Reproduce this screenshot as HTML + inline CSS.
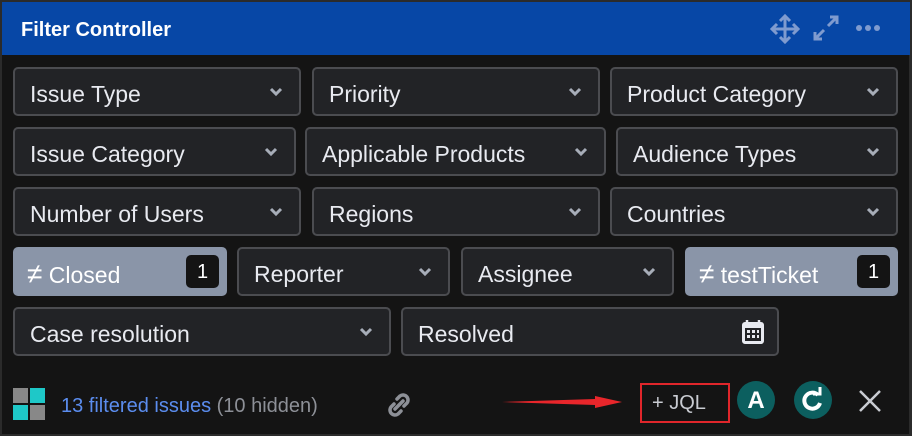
<!DOCTYPE html><html><head><style>
body{margin:0;width:912px;height:436px;background:#2b2b2b;font-family:"Liberation Sans",sans-serif;overflow:hidden;position:relative}
.hd{position:absolute;left:2px;top:2px;width:908px;height:53px;background:#0747a6;color:#fff;font-weight:bold;font-size:20px;line-height:56px;text-indent:19px}
.bd{position:absolute;left:2px;top:55px;width:907px;height:379px;background:#141414}
.b{position:absolute;box-sizing:border-box;height:49px;background:#222326;border:2px solid #4b4c50;border-radius:5px;color:#e8eaf0;font-size:23px;line-height:50px;padding-left:15px;white-space:nowrap}
.b svg.c{position:absolute;right:16px;top:18px}
.a{background:#8a95a8;border-color:#8a95a8;color:#fff}
.n{position:absolute;right:6px;top:6px;width:33px;height:33px;background:#141414;border-radius:5px;color:#fff;text-align:center;line-height:35px;font-size:20px}
.ic{position:absolute;color:#7f9bcf}
</style></head><body>
<div class="hd">Filter Controller</div>
<svg class="ic" style="left:770px;top:14px" width="30" height="30" viewBox="0 0 30 30" fill="none" stroke="#7f9bcf" stroke-width="3"><path d="M15 2V28M2 15H28M10 7l5-5 5 5M10 23l5 5 5-5M7 10l-5 5 5 5M23 10l5 5-5 5"/></svg>
<svg class="ic" style="left:812px;top:14px" width="28" height="28" viewBox="0 0 28 28" fill="none" stroke="#7f9bcf" stroke-width="3"><path d="M16 12l9-9M18 3h7v7M12 16l-9 9M3 18v7h7"/></svg>
<svg class="ic" style="left:855px;top:24px" width="26" height="8"><circle cx="4" cy="4" r="3" fill="#7f9bcf"/><circle cx="13" cy="4" r="3" fill="#7f9bcf"/><circle cx="22" cy="4" r="3" fill="#7f9bcf"/></svg>
<div class="bd"></div>
<div class="b" style="left:13px;top:67px;width:288px">Issue Type<svg class="c" width="14" height="10"><path d="M2 2l5 5 5-5" fill="none" stroke="#a7adb8" stroke-width="3"/></svg></div>
<div class="b" style="left:312px;top:67px;width:288px">Priority<svg class="c" width="14" height="10"><path d="M2 2l5 5 5-5" fill="none" stroke="#a7adb8" stroke-width="3"/></svg></div>
<div class="b" style="left:610px;top:67px;width:288px">Product Category<svg class="c" width="14" height="10"><path d="M2 2l5 5 5-5" fill="none" stroke="#a7adb8" stroke-width="3"/></svg></div>
<div class="b" style="left:13px;top:127px;width:283px">Issue Category<svg class="c" width="14" height="10"><path d="M2 2l5 5 5-5" fill="none" stroke="#a7adb8" stroke-width="3"/></svg></div>
<div class="b" style="left:305px;top:127px;width:301px">Applicable Products<svg class="c" width="14" height="10"><path d="M2 2l5 5 5-5" fill="none" stroke="#a7adb8" stroke-width="3"/></svg></div>
<div class="b" style="left:616px;top:127px;width:282px">Audience Types<svg class="c" width="14" height="10"><path d="M2 2l5 5 5-5" fill="none" stroke="#a7adb8" stroke-width="3"/></svg></div>
<div class="b" style="left:13px;top:187px;width:288px">Number of Users<svg class="c" width="14" height="10"><path d="M2 2l5 5 5-5" fill="none" stroke="#a7adb8" stroke-width="3"/></svg></div>
<div class="b" style="left:312px;top:187px;width:288px">Regions<svg class="c" width="14" height="10"><path d="M2 2l5 5 5-5" fill="none" stroke="#a7adb8" stroke-width="3"/></svg></div>
<div class="b" style="left:610px;top:187px;width:288px">Countries<svg class="c" width="14" height="10"><path d="M2 2l5 5 5-5" fill="none" stroke="#a7adb8" stroke-width="3"/></svg></div>
<div class="b a" style="left:13px;top:247px;width:214px;padding-left:12px"><span style="font-size:28px">≠</span> Closed<span class="n">1</span></div>
<div class="b" style="left:237px;top:247px;width:213px">Reporter<svg class="c" width="14" height="10"><path d="M2 2l5 5 5-5" fill="none" stroke="#a7adb8" stroke-width="3"/></svg></div>
<div class="b" style="left:461px;top:247px;width:213px">Assignee<svg class="c" width="14" height="10"><path d="M2 2l5 5 5-5" fill="none" stroke="#a7adb8" stroke-width="3"/></svg></div>
<div class="b a" style="left:685px;top:247px;width:213px;padding-left:12px"><span style="font-size:28px">≠</span> testTicket<span class="n">1</span></div>
<div class="b" style="left:13px;top:307px;width:378px">Case resolution<svg class="c" width="14" height="10"><path d="M2 2l5 5 5-5" fill="none" stroke="#a7adb8" stroke-width="3"/></svg></div>
<div class="b" style="left:401px;top:307px;width:378px">Resolved
<svg style="position:absolute;right:12px;top:10px" width="24" height="26" viewBox="0 0 24 26"><rect x="1" y="3" width="22" height="22" rx="3" fill="#e8eaf0"/><rect x="4" y="9" width="16" height="13" fill="#222326"/><path d="M6 1v5M18 1v5" stroke="#e8eaf0" stroke-width="2.5"/><g fill="#e8eaf0"><rect x="6" y="11" width="3" height="3"/><rect x="11" y="11" width="3" height="3"/><rect x="16" y="11" width="2" height="3"/><rect x="6" y="16" width="3" height="3"/><rect x="11" y="16" width="3" height="3"/><rect x="16" y="16" width="2" height="3"/></g></svg></div>
<div style="position:absolute;left:13px;top:388px;width:15px;height:15px;background:#888"></div>
<div style="position:absolute;left:30px;top:388px;width:15px;height:15px;background:#1ec8c8"></div>
<div style="position:absolute;left:13px;top:405px;width:15px;height:15px;background:#1ec8c8"></div>
<div style="position:absolute;left:30px;top:405px;width:15px;height:15px;background:#888"></div>
<div style="position:absolute;left:61px;top:395px;font-size:20px;color:#5b8def;white-space:nowrap">13 filtered issues <span style="color:#8d9097">(10 hidden)</span></div>
<svg style="position:absolute;left:384px;top:390px" width="30" height="30" viewBox="0 0 30 30" fill="none" stroke="#8d9097" stroke-width="3.5" stroke-linecap="round"><path d="M13 9l3-3a5 5 0 0 1 7 7l-3 3"/><path d="M17 21l-3 3a5 5 0 0 1-7-7l3-3"/><path d="M11 19l8-8"/></svg>
<svg style="position:absolute;left:500px;top:392px" width="125" height="20"><path d="M2 10L95 7V4L122 10L95 16V13Z" fill="#e8262b"/></svg>
<div style="position:absolute;left:640px;top:383px;width:86px;height:36px;border:2px solid #e0262b;color:#c9ccd2;font-size:20px;line-height:36px;text-indent:10px">+ JQL</div>
<div style="position:absolute;left:737px;top:381px;width:38px;height:38px;border-radius:50%;background:#0c5f5f;color:#fff;font-weight:bold;font-size:24px;text-align:center;line-height:40px">A</div>
<div style="position:absolute;left:794px;top:381px;width:38px;height:38px;border-radius:50%;background:#0c5f5f"><svg width="38" height="38" viewBox="0 0 38 38" fill="none" stroke="#fff" stroke-width="4"><path d="M24 14A8 8 0 1 0 26 22"/><path d="M19 13h7V6" stroke-width="3"/></svg></div>
<svg style="position:absolute;left:858px;top:389px" width="24" height="24" stroke="#c9ccd2" stroke-width="2.5"><path d="M2 2L22 22M22 2L2 22"/></svg>
</body></html>
